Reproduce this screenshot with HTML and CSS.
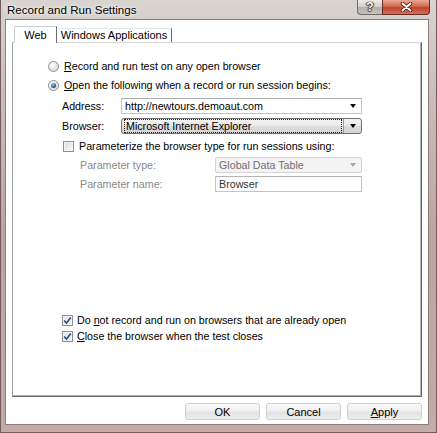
FILE: index.html
```html
<!DOCTYPE html>
<html lang="en">
<head>
  <meta charset="UTF-8">
  <title>Record and Run Settings</title>
  <link rel="stylesheet" href="styles.css">
</head>
<body>
  <div class="window">
    <!-- title bar -->
    <div class="titlebar">
      <span class="title">Record and Run Settings</span>
      <div class="caption-buttons">
        <span class="cap-btn help">?</span>
        <span class="cap-btn close">
          <svg width="13" height="10" viewBox="0 0 13 10">
            <path d="M2.5 1.5 L10.5 8.5 M10.5 1.5 L2.5 8.5" stroke="#4a1810" stroke-width="3.6" stroke-linecap="round"/>
            <path d="M2.5 1.5 L10.5 8.5 M10.5 1.5 L2.5 8.5" stroke="#fff" stroke-width="2" stroke-linecap="round"/>
          </svg>
        </span>
      </div>
    </div>

    <div class="client">
      <div class="tabs">
        <span class="tab selected">Web</span>
        <span class="tab">Windows Applications</span>
      </div>

      <div class="panel">
        <label class="option"><span class="radio"></span><span><u>R</u>ecord and run test on any open browser</span></label>
        <label class="option second"><span class="radio checked"></span><span><u>O</u>pen the following when a record or run session begins:</span></label>

        <div class="fields">
          <span>Address:</span>
          <div class="combo edit">
            <span class="combo-text">http://newtours.demoaut.com</span>
            <span class="arrow"></span>
          </div>
          <span>Browser:</span>
          <div class="combo list">
            <span class="focus-rect">Microsoft Internet Explorer</span>
            <span class="arrow-box"><span class="arrow"></span></span>
          </div>
        </div>

        <label class="check param-check"><span class="box"></span><span>Parameterize the browser type for run sessions using:</span></label>

        <div class="param-fields">
          <span class="muted">Parameter type:</span>
          <div class="combo disabled">
            <span class="combo-text">Global Data Table</span>
            <span class="arrow"></span>
          </div>
          <span class="muted">Parameter name:</span>
          <div class="textbox">Browser</div>
        </div>

        <div class="bottom-checks">
          <label class="check"><span class="box checked"><svg width="9" height="9" viewBox="0 0 9 9"><path d="M1.2 4.6 L3.6 7 L7.8 1.4" fill="none" stroke="#2f4f7f" stroke-width="1.7"/></svg></span><span>Do <u>n</u>ot record and run on browsers that are already open</span></label>
          <label class="check"><span class="box checked"><svg width="9" height="9" viewBox="0 0 9 9"><path d="M1.2 4.6 L3.6 7 L7.8 1.4" fill="none" stroke="#2f4f7f" stroke-width="1.7"/></svg></span><span><u>C</u>lose the browser when the test closes</span></label>
        </div>
      </div>

      <div class="buttons">
        <button>OK</button>
        <button>Cancel</button>
        <button><u>A</u>pply</button>
      </div>
    </div>
  </div>
</body>
</html>
```

FILE: styles.css
```css
body {
  margin: 0;
  font-family: "Liberation Sans", Arial, sans-serif;
  font-size: 10.7px;
  color: #000;
  background: #fff;
}

.window {
  width: 437px;
  height: 433px;
  box-sizing: border-box;
  padding: 0 7px 7px 4px;
  border: 1px solid #6f5e5c;
  border-top: none;
  background: linear-gradient(180deg, #d8d4d0 0%, #cbbfbb 20%, #bea3a0 55%, #c5aba8 100%);
  display: flex;
  flex-direction: column;
}

/* title bar */
.titlebar {
  height: 19px;
  display: flex;
  justify-content: space-between;
  flex-shrink: 0;
}

.title {
  padding: 3px 0 0 2px;
  font-size: 11.6px;
  text-shadow: 0 0 6px #fff, 0 0 3px #fff;
}

.caption-buttons {
  display: flex;
  margin-right: -1px;
}

.cap-btn {
  height: 15px;
  box-sizing: border-box;
  display: flex;
  align-items: center;
  justify-content: center;
}

.help {
  width: 25px;
  border: 1px solid #6e6a68;
  border-top: none;
  border-right: none;
  border-radius: 0 0 0 4px;
  background: linear-gradient(180deg, #eceae8 0%, #d2cfcc 48%, #b5b0ac 52%, #c6c1bd 100%);
  color: #fff;
  font-weight: bold;
  font-size: 12px;
  text-shadow: 0 0 1px #333, 1px 0 1px #333, -1px 0 1px #333, 0 1px 1px #333;
}

.close {
  width: 48px;
  border: 1px solid #6b2a22;
  border-top: none;
  border-radius: 0 0 4px 0;
  background: linear-gradient(180deg, #eaa898 0%, #d4694f 45%, #c0432a 55%, #d0705a 100%);
}

/* client area */
.client {
  flex: 1;
  background: #fff;
  border: 1px solid #8a7c7a;
  padding: 0 6px;
  display: flex;
  flex-direction: column;
}

.tabs {
  height: 22px;
  box-sizing: border-box;
  padding-left: 2px;
  display: flex;
  align-items: flex-end;
}

.tab {
  height: 14px;
  box-sizing: border-box;
  width: 115px;
  text-align: center;
  line-height: 13px;
  font-size: 11px;
  border-top: 1px solid #e6e6e6;
  border-right: 1px solid #6a6a6a;
}

.tab.selected {
  width: 43px;
  height: 17px;
  line-height: 17px;
  border-left: 1px solid #d0d0d0;
  border-top: 1px solid #d0d0d0;
  background: #fff;
  margin-bottom: -1px;
  position: relative;
  z-index: 1;
}

.panel {
  height: 355px;
  box-sizing: border-box;
  border-top: 1px solid #d6d6d6;
  border-left: 1px solid #9c9c9c;
  border-right: 1px solid #686868;
  border-bottom: 1px solid #686868;
  box-shadow: inset -1px -1px 0 #b0b0b0;
  padding: 14px 0 52px 35px;
  display: flex;
  flex-direction: column;
}

.option {
  height: 18px;
  display: flex;
  align-items: center;
  gap: 5px;
}

.option.second {
  margin-top: 1px;
}

.radio {
  width: 11px;
  height: 11px;
  box-sizing: border-box;
  border-radius: 50%;
  border: 1px solid #8d8f90;
  background: radial-gradient(circle at 40% 35%, #fff 0%, #e4e4e4 55%, #cbcbcb 100%);
  display: flex;
  align-items: center;
  justify-content: center;
}

.radio.checked::after {
  content: "";
  width: 5px;
  height: 5px;
  border-radius: 50%;
  background: radial-gradient(circle at 40% 35%, #9ad0f2 0%, #22649a 55%, #0b2c4c 100%);
}

/* address / browser */
.fields {
  margin: 4px 0 0 14px;
  display: grid;
  grid-template-columns: 59px 241px;
  grid-auto-rows: 16px;
  row-gap: 4px;
  align-items: center;
}

.combo {
  height: 16px;
  box-sizing: border-box;
  display: flex;
  align-items: center;
  justify-content: space-between;
}

.combo.edit {
  border: 1px solid #c2c6cc;
  border-top-color: #abadb3;
  padding: 0 5px 0 3px;
}

.combo-text {
  white-space: nowrap;
}

.arrow {
  width: 0;
  height: 0;
  border-left: 3.5px solid transparent;
  border-right: 3.5px solid transparent;
  border-top: 4px solid #000;
}

.combo.list {
  border: 1px solid #707070;
  border-radius: 3px;
  background: linear-gradient(180deg, #f4f4f4 0%, #e9e9e9 48%, #dcdcdc 52%, #d4d4d4 100%);
  padding: 1px 0 1px 2px;
}

.focus-rect {
  flex: 1;
  height: 12px;
  line-height: 12px;
  padding-left: 1px;
  border: 1px dotted #222;
  white-space: nowrap;
}

.arrow-box {
  width: 17px;
  height: 14px;
  margin-left: 1px;
  border-left: 1px solid #9a9a9a;
  display: flex;
  align-items: center;
  justify-content: center;
}

/* parameterize */
.check {
  height: 16px;
  display: flex;
  align-items: center;
  gap: 4px;
}

.param-check {
  margin: 4px 0 0 15px;
  gap: 5px;
}

.box {
  width: 11px;
  height: 11px;
  box-sizing: border-box;
  border: 1px solid #8e8f8f;
  background: linear-gradient(135deg, #d8d8d8 0%, #f2f2f2 70%, #fff 100%);
  box-shadow: inset 0 0 0 1px #f4f4f4;
  display: flex;
  align-items: center;
  justify-content: center;
}

.box.checked {
  background: linear-gradient(135deg, #e2e8ee 0%, #f6f8fa 100%);
}

.param-fields {
  margin: 3px 0 0 32px;
  display: grid;
  grid-template-columns: 135px 147px;
  grid-auto-rows: 16px;
  row-gap: 3px;
  align-items: center;
}

.muted {
  color: #8a8a8a;
}

.combo.disabled {
  border: 1px solid #d3d3d3;
  border-radius: 2px;
  background: #f4f4f4;
  color: #6f6f6f;
  padding: 0 5px 0 3px;
}

.combo.disabled .arrow {
  border-top-color: #a8a8a8;
}

.textbox {
  height: 16px;
  box-sizing: border-box;
  border: 1px solid #c4c4c4;
  border-top-color: #b4b4b4;
  padding: 0 3px;
  line-height: 14px;
  color: #333;
}

.bottom-checks {
  margin: auto 0 0 14px;
  display: flex;
  flex-direction: column;
}

/* dialog buttons */
.buttons {
  margin-top: 6px;
  display: flex;
  justify-content: flex-end;
  gap: 6px;
}

.buttons button {
  width: 75px;
  height: 17px;
  padding: 0;
  font-family: inherit;
  font-size: 11px;
  color: #000;
  border: 1px solid #cfcfcf;
  border-radius: 3px;
  background: linear-gradient(180deg, #f8f8f8 0%, #f0f0f0 48%, #e4e4e4 52%, #ececec 100%);
}
```
